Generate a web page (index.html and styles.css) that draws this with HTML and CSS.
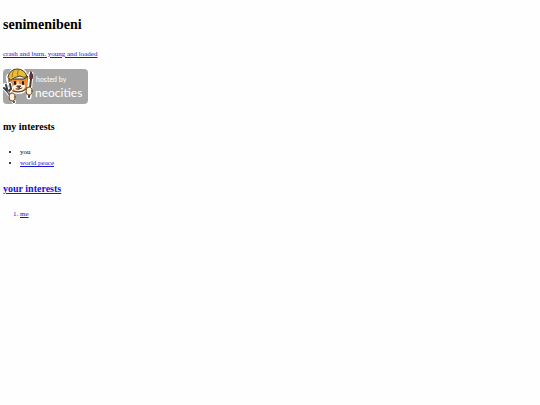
FILE: index.html
```html
<!DOCTYPE html>
<html lang="en">
<head>
    <meta charset="UTF-8">
    <meta name="viewport" content="width=device-width, initial-scale=1.0">
    <title>senimenibeni</title>
    <link rel="stylesheet" href="styles.css">
</head>
<body>
    <h1>senimenibeni</h1>
    <p class="tagline"><a href="#">crash and burn. young and loaded</a></p>

    <!-- Hosting badge -->
    <a class="badge" href="#" aria-label="hosted by neocities">
        <svg width="87" height="38" viewBox="0 0 87 38">
            <rect x="1" y="2" width="85" height="35" rx="4" fill="#a6a6a6"/>
            <g stroke-linecap="round" stroke-linejoin="round">
                <!-- cat -->
                <path d="M6 15 Q3 8 8 7 Q9 1 16 2 Q23 1 24 8 Q28 8 28 12 L26 20 Q23 26 16 26 Q8 26 6 20Z" fill="#fff" stroke="#fff" stroke-width="2"/>
                <path d="M7 14 L7 9 L11 12 L22 12 L26 9 L26 19 Q23 25 16 25 Q9 25 7 20Z" fill="#e8903c" stroke="#33261c" stroke-width="1"/>
                <path d="M16 13 L17 17 L23 18 Q24 23 17 24 Q10 24 11 19 L15 17Z" fill="#fff3df"/>
                <path d="M6 10 Q8 2 15 2 Q23 2 25 10 Q21 11 18 9 Q12 10 9 13Z" fill="#e9bd3c" stroke="#4a3a1c" stroke-width="1"/>
                <path d="M12 3 Q10 6 10 10 M16 3 Q15 6 16 9" fill="none" stroke="#9b7624" stroke-width="1"/>
                <path d="M13 15 V17 M21 15 V17" stroke="#1d1a18" stroke-width="2"/>
                <path d="M15 19 L19 19 L17 21Z M14 22 Q17 23 20 21" fill="#513428" stroke="#513428" stroke-width="1"/>
                <!-- fork -->
                <path d="M3 18 L6 25 L12 35 M8 17 L9 22 L6 25 L2 21" fill="none" stroke="#fff" stroke-width="4"/>
                <path d="M4 18 L6 25 L12 35 M8 17 L9 22 L6 25 L2 21" fill="none" stroke="#3c3c40" stroke-width="2"/>
                <path d="M6 24 L11 34" stroke="#b8bcc2" stroke-width="1"/>
                <!-- brush -->
                <path d="M29 7 L28 16 L27 30" fill="none" stroke="#fff" stroke-width="5"/>
                <path d="M29 12 L27 30" stroke="#46342a" stroke-width="2"/>
                <path d="M29 5 Q32 8 30 12 L28 12 Q27 8 29 5Z" fill="#8f2630" stroke="#4c2526" stroke-width="1"/>
                <!-- paws -->
                <ellipse cx="10" cy="30" rx="3" ry="4" fill="#fff1d6" stroke="#69482c" stroke-width="1"/>
                <ellipse cx="27" cy="24" rx="3" ry="4" fill="#fff1d6" stroke="#69482c" stroke-width="1"/>
            </g>
            <text class="badge-small" x="34" y="15">hosted by</text>
            <text class="badge-name" x="33" y="30">neocities</text>
        </svg>
    </a>

    <h2>my interests</h2>
    <ul>
        <li>you</li>
        <li><a href="#">world peace</a></li>
    </ul>

    <h2 class="yours"><a href="#">your interests</a></h2>
    <ol>
        <li><a href="#">me</a></li>
    </ol>
</body>
</html>
```
FILE: styles.css
```css
body {
    margin: 13px 3px;
    background-color: #fefefe;
    color: #000;
    font-family: "Liberation Serif", "Times New Roman", serif;
    font-size: 7px;
    line-height: 11px;
}

h1 {
    margin: 0;
    font-size: 14px;
    line-height: 24px;
}

h2 {
    margin: 14px 0 12px;
    font-size: 10px;
    line-height: 16px;
}

h2.yours {
    margin-top: 12px;
}

a {
    color: #1a12d8;
}

.tagline {
    margin: 12px 0 7px;
}

.badge {
    display: block;
}

.badge svg {
    display: block;
    margin-left: -1px;
}

.badge-small,
.badge-name {
    fill: #fff;
    font-family: Lato, "Open Sans", sans-serif;
}

.badge-small {
    font-size: 7px;
}

.badge-name {
    font-size: 12px;
}

ul, ol {
    margin: 0;
    padding-left: 17px;
}

ol {
    color: #1a12d8;
}
```
